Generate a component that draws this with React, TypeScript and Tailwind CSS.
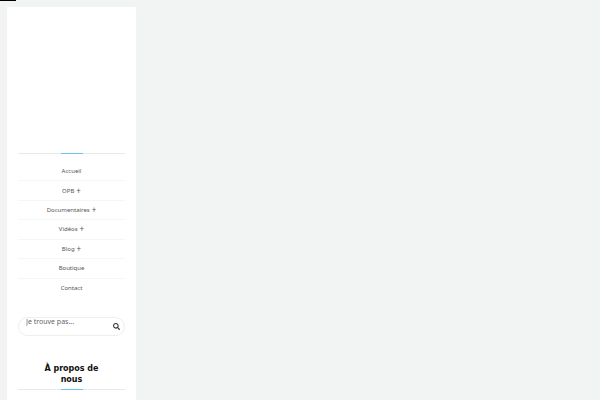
import React from 'react';
import { FaSearch } from 'react-icons/fa';

const navItems = [
  { name: 'Accueil', hasChildren: false },
  { name: 'OPB', hasChildren: true },
  { name: 'Documentaires', hasChildren: true },
  { name: 'Vidéos', hasChildren: true },
  { name: 'Blog', hasChildren: true },
  { name: 'Boutique', hasChildren: false },
  { name: 'Contact', hasChildren: false },
];

const Divider: React.FC = () => (
  <div className="flex h-px justify-center bg-[#e6e9e9]">
    <span className="h-px w-[22px] bg-[#6cc4ea]" />
  </div>
);

const SearchForm: React.FC = () => (
  <form
    className="mt-[19px] flex h-[19px] items-center rounded-full border border-[#eeeeee] pr-1 pl-[7px]"
    onSubmit={(e) => e.preventDefault()}
  >
    <input
      type="text"
      aria-label="Rechercher"
      placeholder="Je trouve pas..."
      className="h-full min-w-0 flex-1 bg-transparent pb-[10px] font-['Noto_Sans',sans-serif] text-[7px] leading-[8px] text-[#555] outline-none placeholder:text-[#666]"
    />
    <button type="submit" aria-label="Lancer la recherche" className="text-[#333]">
      <FaSearch size={7} />
    </button>
  </form>
);

const Sidebar: React.FC = () => (
  <aside className="w-[129px] shrink-0 bg-white px-[11px] pt-[146px]">
    <Divider />
    <nav className="mt-2">
      <ul className="grid h-[136px] auto-rows-fr">
        {navItems.map((item) => (
          <li
            key={item.name}
            className="flex items-center justify-center border-b border-[#f6f6f6] last:border-b-0"
          >
            <a
              href="#"
              className="flex items-center gap-0.5 font-['Noto_Sans',sans-serif] text-[6px] leading-[8px] text-[#555]"
            >
              {item.name}
              {item.hasChildren && <span className="text-[8px]">+</span>}
            </a>
          </li>
        ))}
      </ul>
    </nav>
    <SearchForm />
    <section className="mt-[27px]">
      <h2 className="mb-1 px-5 text-center text-[8px] leading-[11px] font-bold text-[#111]">
        À propos de nous
      </h2>
      <Divider />
    </section>
  </aside>
);

const App: React.FC = () => {
  return (
    <div className="flex min-h-screen flex-col bg-[#f2f4f4] font-['DejaVu_Sans',sans-serif]">
      <div className="h-[7px]">
        <div className="h-px w-4 bg-black" />
      </div>
      <div className="flex flex-1 pl-[7px]">
        <Sidebar />
        <main className="flex-1" />
      </div>
    </div>
  );
};

export default App;
